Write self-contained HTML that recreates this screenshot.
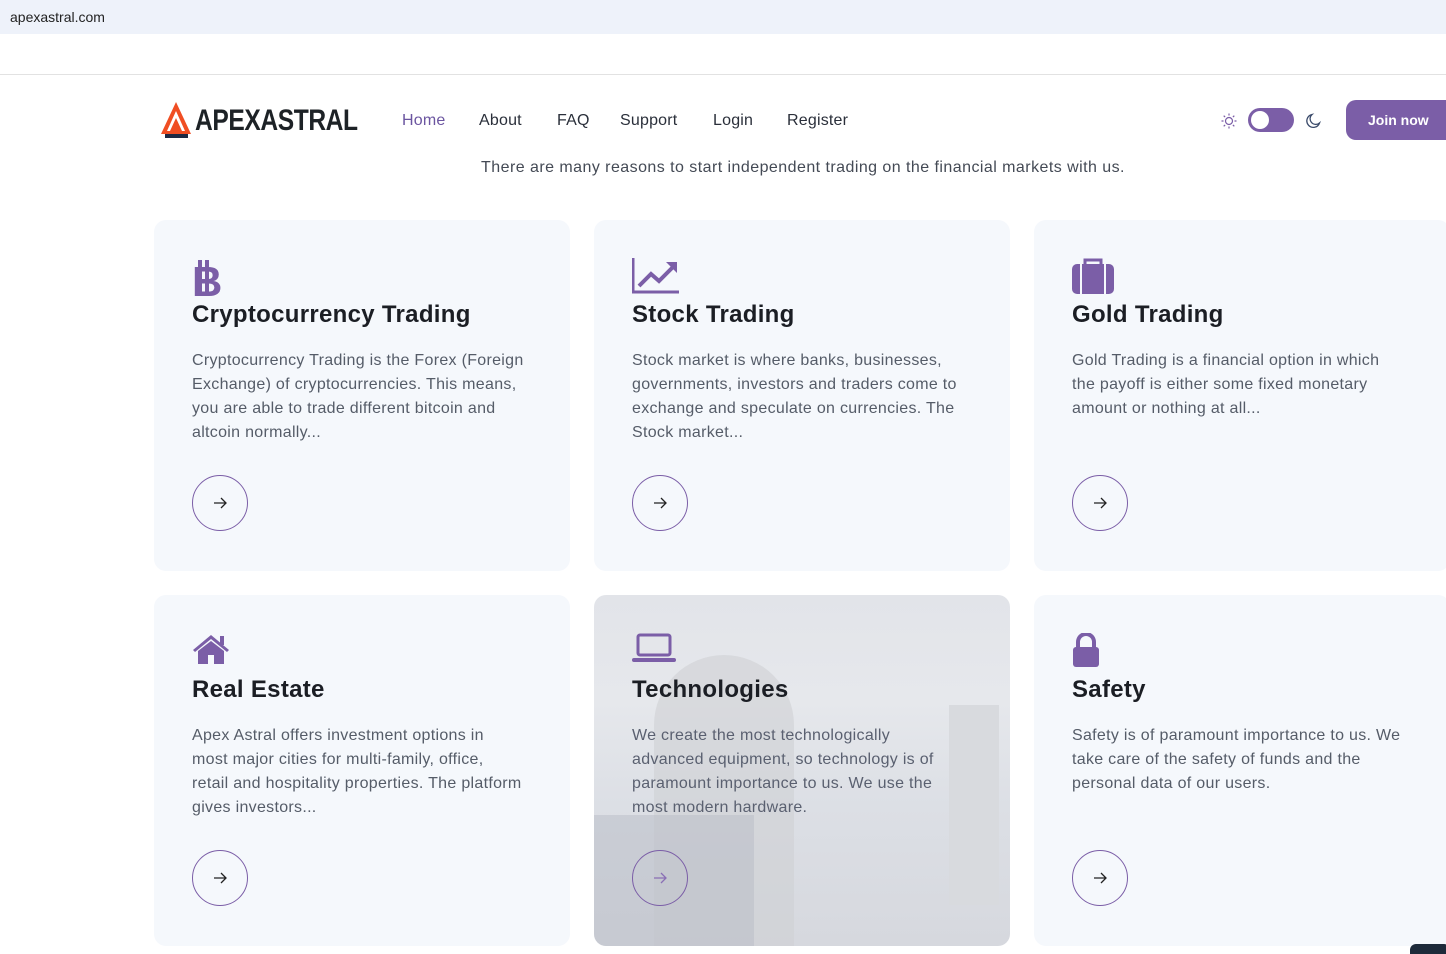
<!DOCTYPE html>
<html><head><meta charset="utf-8">
<style>
*{box-sizing:border-box;margin:0;padding:0}
body{width:1446px;height:951px;overflow:hidden;background:#fff;font-family:"Liberation Sans",sans-serif;position:relative}
.top{position:absolute;left:0;top:0;width:1446px;height:34px;background:#eef2fa;font-size:14px;color:#222;padding:9px 10px}
.line{position:absolute;left:0;top:74px;width:1446px;height:1px;background:#e2e2e2}
.logo{position:absolute;left:160px;top:102px;display:flex;align-items:center;width:300px}
.logo span{display:inline-block;font-weight:900;font-size:30px;color:#1d2226;letter-spacing:-0.5px;margin-left:3px;transform:scaleX(0.82);transform-origin:left}
.nav{position:absolute;top:112px;left:402px;font-size:16px;color:#2a2f3a;letter-spacing:0.2px}
.nav a{position:absolute;white-space:nowrap}
.join{position:absolute;left:1346px;top:100px;width:110px;height:40px;background:#7b5ea7;border-radius:10px;color:#fff;font-weight:bold;font-size:14px;padding:12px 0 0 22px}
.tog{position:absolute;left:1248px;top:108px;width:46px;height:24px;border-radius:12px;background:#7b5ea7}
.tog:after{content:"";position:absolute;left:3px;top:3px;width:18px;height:18px;border-radius:50%;background:#fff}
.sub{position:absolute;top:159px;left:0;width:1606px;text-align:center;font-size:16px;color:#444a55;letter-spacing:0.45px}
.card{position:absolute;width:416px;height:351px;background:#f5f8fc;border-radius:12px;overflow:hidden}
.card .ic{position:absolute;left:38px;top:38px}
.card h3{position:absolute;left:38px;top:81px;font-size:24px;font-weight:bold;color:#1b1e24;letter-spacing:0.3px;white-space:nowrap}
.card p{position:absolute;left:38px;top:129px;width:345px;font-size:16px;line-height:24px;color:#555c68;letter-spacing:0.3px}
.card .arr{position:absolute;left:38px;top:255px;width:56px;height:56px;border:1.3px solid #7b5ea7;border-radius:50%}
.arr svg{position:absolute;left:20px;top:20px}
</style></head><body>
<div class="top">apexastral.com</div>
<div class="line"></div>
<div class="logo">
<svg width="32" height="38" viewBox="0 0 32 38"><polygon points="16,0 31,32 1,32" fill="#f04e23"/><polygon points="16,9 25,29 7,29" fill="#fff"/><polygon points="16,16 22,29 10,29" fill="#f04e23"/><rect x="5" y="32" width="23" height="4" fill="#1d2a44"/></svg>
<span>APEXASTRAL</span></div>
<div class="nav"><a style="left:0;color:#6b55a0">Home</a><a style="left:77px">About</a><a style="left:155px">FAQ</a><a style="left:218px">Support</a><a style="left:311px">Login</a><a style="left:385px">Register</a></div>
<svg style="position:absolute;left:1221px;top:113px" width="16" height="16" viewBox="0 0 16 16" stroke="#7b5ea7" fill="none" stroke-width="1.2"><circle cx="8" cy="8" r="3.5"/><path d="M8 0.5v2M8 13.5v2M0.5 8h2M13.5 8h2M2.7 2.7l1.4 1.4M11.9 11.9l1.4 1.4M2.7 13.3l1.4-1.4M11.9 4.1l1.4-1.4"/></svg>
<div class="tog"></div>
<svg style="position:absolute;left:1305px;top:113px" width="16" height="16" viewBox="0 0 16 16" fill="none" stroke="#3a4a6a" stroke-width="1.3"><path d="M7 1.5A6.5 6.5 0 1 0 14.5 10 5 5 0 0 1 7 1.5z"/></svg>
<div class="join">Join now</div>
<div class="sub">There are many reasons to start independent trading on the financial markets with us.</div>

<div class="card" style="left:154px;top:220px">
<svg class="ic" width="30" height="40" viewBox="0 0 30 40"><text x="0" y="38" font-family="Liberation Sans" font-weight="bold" font-size="42" fill="#7b5ea7">B</text><rect x="6" y="2" width="4" height="36" fill="#7b5ea7"/><rect x="13" y="2" width="4" height="36" fill="#7b5ea7"/></svg>
<h3>Cryptocurrency Trading</h3>
<p>Cryptocurrency Trading is the Forex (Foreign Exchange) of cryptocurrencies. This means, you are able to trade different bitcoin and altcoin normally...</p>
<div class="arr"><svg width="14" height="14" viewBox="0 0 14 14" fill="none" stroke="#222" stroke-width="1.3"><path d="M1 7h12M8 2l5 5-5 5"/></svg></div></div>

<div class="card" style="left:594px;top:220px">
<svg class="ic" width="48" height="36" viewBox="0 0 48 36"><path d="M1 0v34h46" stroke="#7b5ea7" stroke-width="3" fill="none"/><path d="M7 28l12-12 8 7 14-14" stroke="#7b5ea7" stroke-width="4" fill="none"/><polygon points="34,4 45,4 45,15" fill="#7b5ea7"/></svg>
<h3>Stock Trading</h3>
<p>Stock market is where banks, businesses, governments, investors and traders come to exchange and speculate on currencies. The Stock market...</p>
<div class="arr"><svg width="14" height="14" viewBox="0 0 14 14" fill="none" stroke="#222" stroke-width="1.3"><path d="M1 7h12M8 2l5 5-5 5"/></svg></div></div>

<div class="card" style="left:1034px;top:220px">
<svg class="ic" width="42" height="36" viewBox="0 0 42 36"><rect x="0" y="6" width="42" height="30" rx="5" fill="#7b5ea7"/><path d="M13 6V2h16v4" stroke="#7b5ea7" stroke-width="3" fill="none"/><rect x="8" y="6" width="2" height="30" fill="#f5f8fc"/><rect x="32" y="6" width="2" height="30" fill="#f5f8fc"/></svg>
<h3>Gold Trading</h3>
<p style="width:320px">Gold Trading is a financial option in which the payoff is either some fixed monetary amount or nothing at all...</p>
<div class="arr"><svg width="14" height="14" viewBox="0 0 14 14" fill="none" stroke="#222" stroke-width="1.3"><path d="M1 7h12M8 2l5 5-5 5"/></svg></div></div>

<div class="card" style="left:154px;top:595px">
<svg class="ic" width="38" height="32" viewBox="0 0 38 32"><path d="M19 2L1 17l2 2L19 6l16 13 2-2z" fill="#7b5ea7"/><path d="M6 18v13h10v-9h6v9h10V18L19 8z" fill="#7b5ea7"/><rect x="28" y="3" width="4" height="9" fill="#7b5ea7"/></svg>
<h3>Real Estate</h3>
<p style="width:331px">Apex Astral offers investment options in most major cities for multi-family, office, retail and hospitality properties. The platform gives investors...</p>
<div class="arr"><svg width="14" height="14" viewBox="0 0 14 14" fill="none" stroke="#222" stroke-width="1.3"><path d="M1 7h12M8 2l5 5-5 5"/></svg></div></div>

<div class="card" style="left:594px;top:595px;background:linear-gradient(180deg,#e2e4e9 0%,#e6e8ec 30%,#dcdfe5 60%,#d6d8de 100%)">
<div style="position:absolute;left:60px;top:60px;width:140px;height:300px;border-radius:70px 70px 0 0;background:#cfd0d4;opacity:.6"></div>
<div style="position:absolute;left:0;top:220px;width:160px;height:140px;background:#b8bcc6;opacity:.5"></div>
<div style="position:absolute;left:355px;top:110px;width:50px;height:200px;background:#d8dade"></div>
<svg class="ic" width="44" height="30" viewBox="0 0 44 30"><rect x="6" y="2" width="32" height="20" rx="2" fill="none" stroke="#7b5ea7" stroke-width="3"/><rect x="0" y="25" width="44" height="4" rx="2" fill="#7b5ea7"/></svg>
<h3>Technologies</h3>
<p style="color:#5a6070;width:320px">We create the most technologically advanced equipment, so technology is of paramount importance to us. We use the most modern hardware.</p>
<div class="arr"><svg width="14" height="14" viewBox="0 0 14 14" fill="none" stroke="#8a6fb5" stroke-width="1.3"><path d="M1 7h12M8 2l5 5-5 5"/></svg></div></div>

<div class="card" style="left:1034px;top:595px">
<svg class="ic" width="28" height="34" viewBox="0 0 28 34"><path d="M6 14V9a8 8 0 0 1 16 0v5" stroke="#7b5ea7" stroke-width="4" fill="none"/><rect x="1" y="14" width="26" height="20" rx="3" fill="#7b5ea7"/></svg>
<h3>Safety</h3>
<p>Safety is of paramount importance to us. We take care of the safety of funds and the personal data of our users.</p>
<div class="arr"><svg width="14" height="14" viewBox="0 0 14 14" fill="none" stroke="#222" stroke-width="1.3"><path d="M1 7h12M8 2l5 5-5 5"/></svg></div></div>
<div style="position:absolute;left:1410px;top:944px;width:40px;height:10px;background:#1d2a3a;border-radius:6px 6px 0 0"></div>
</body></html>
